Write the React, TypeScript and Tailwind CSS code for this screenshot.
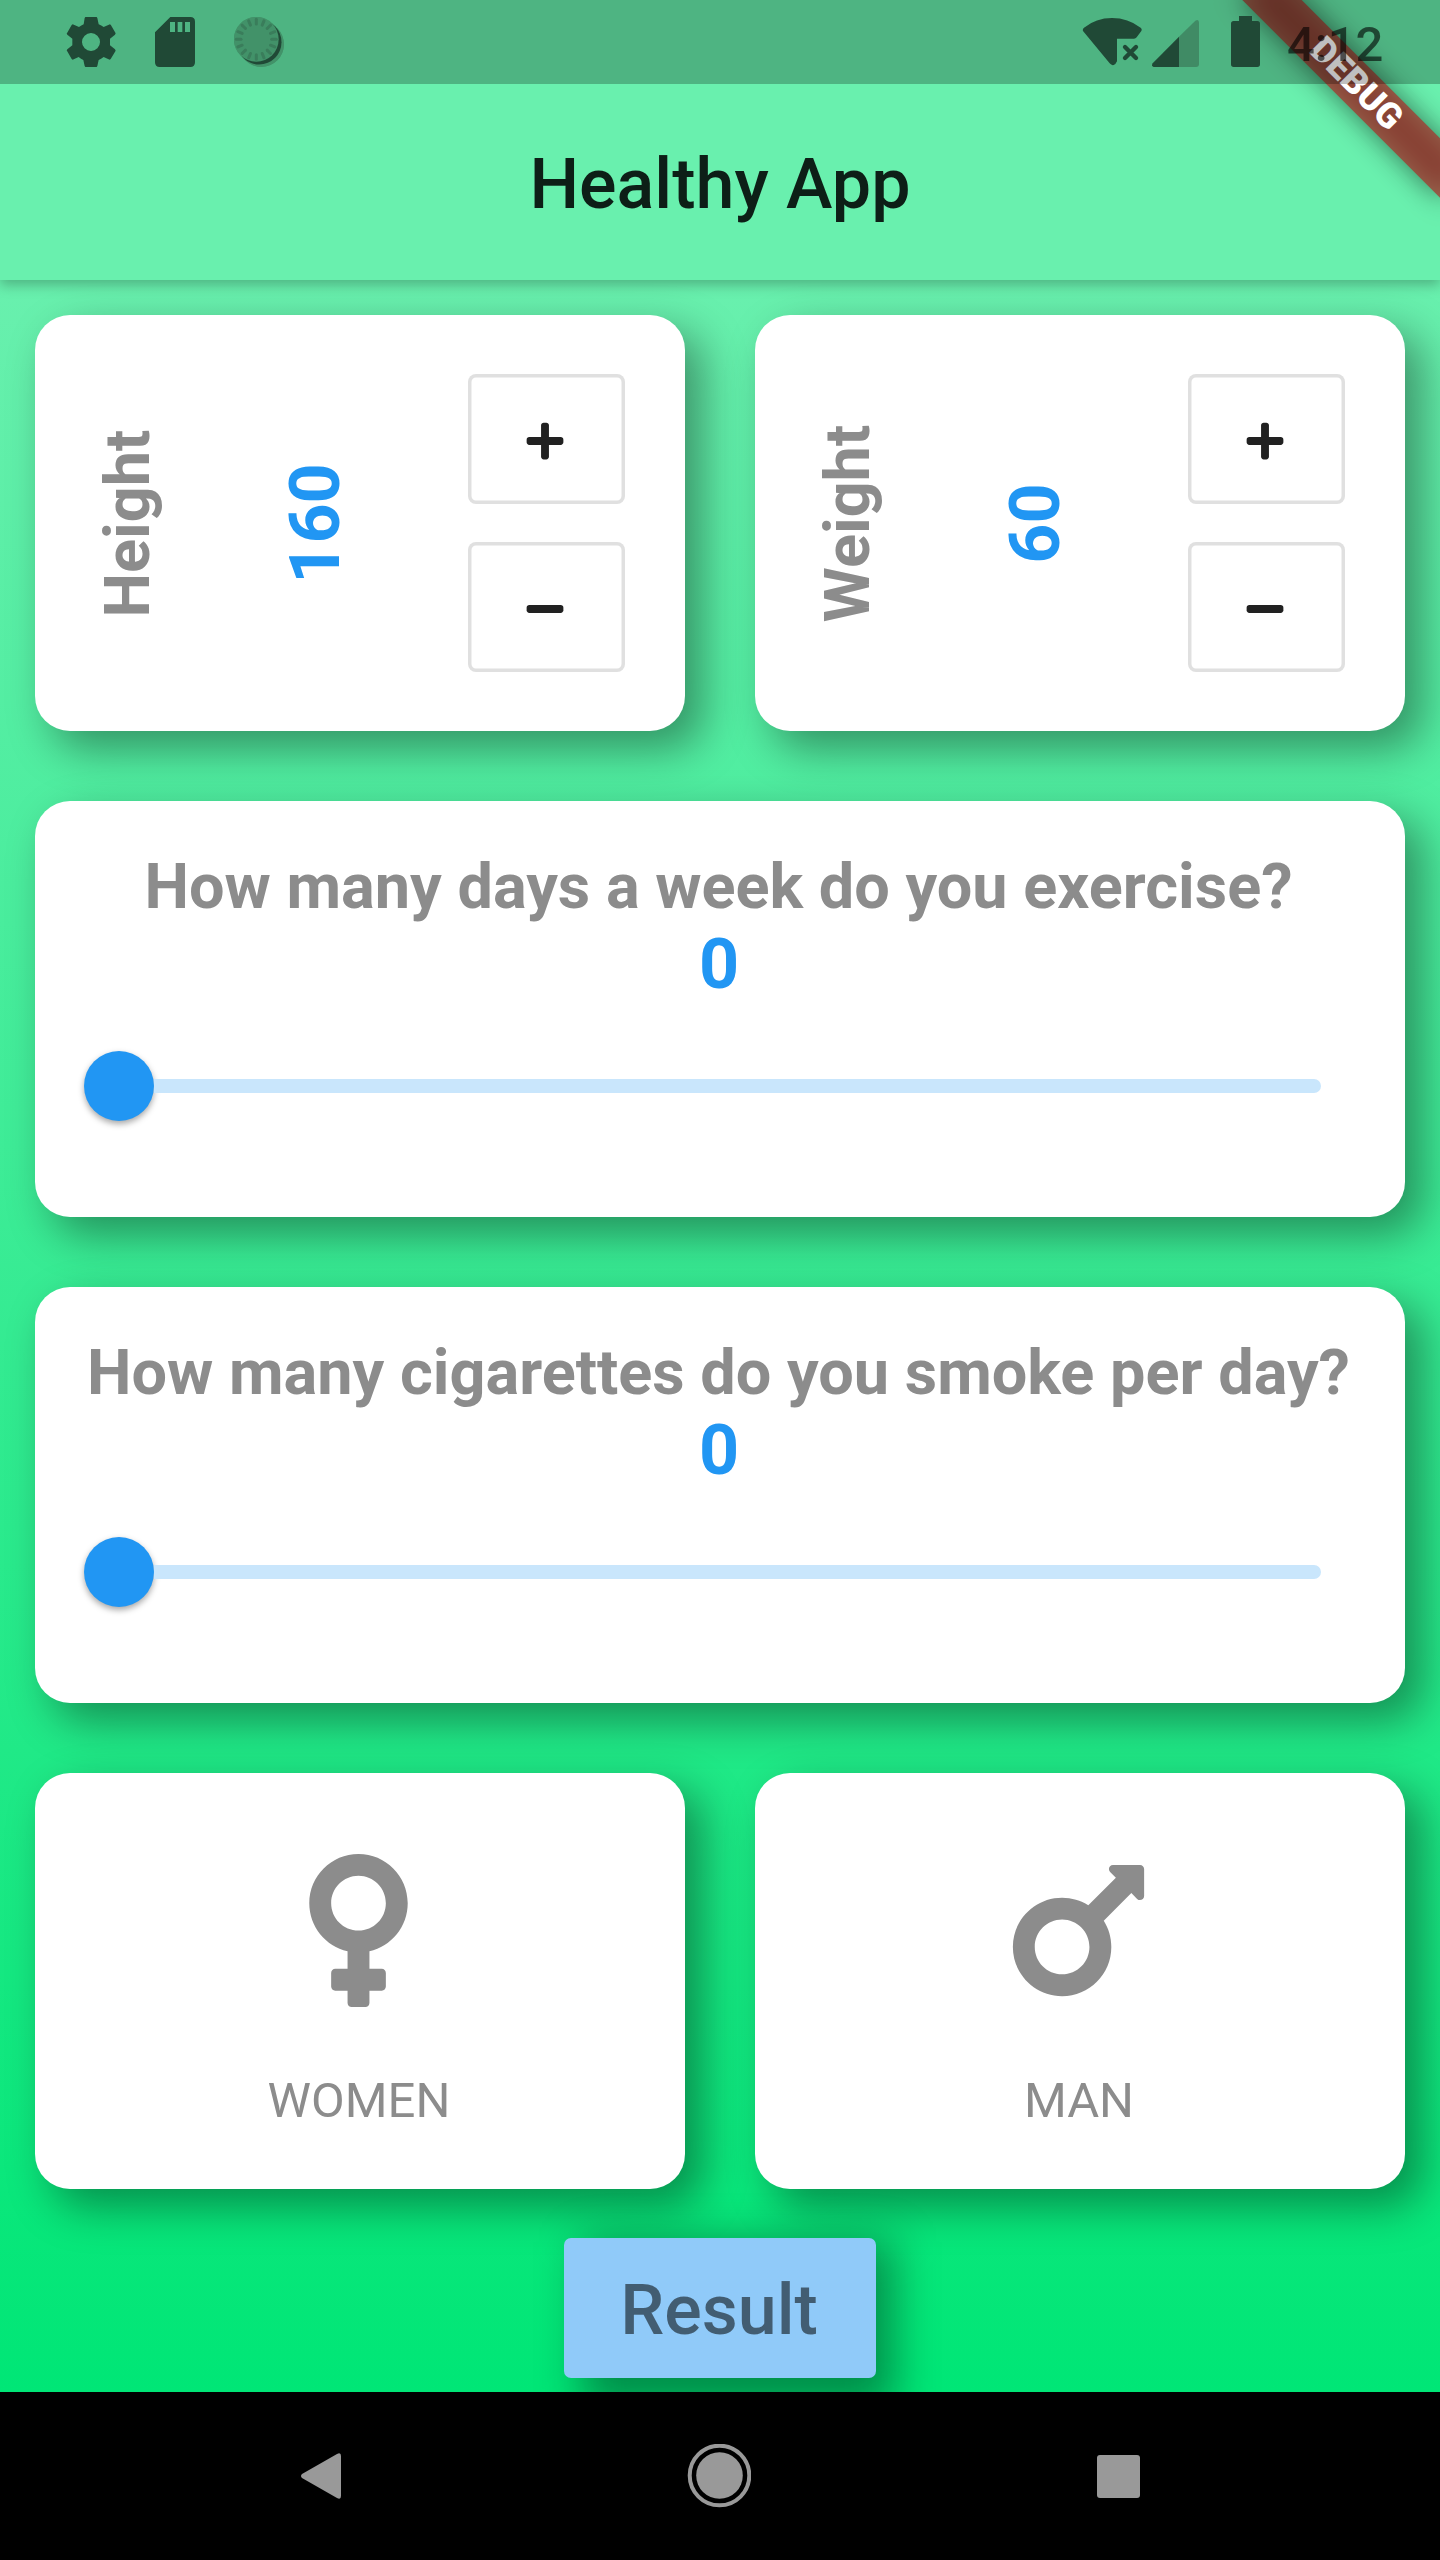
import React from "react";
import { FaMars, FaMinus, FaPlus, FaVenus } from "react-icons/fa";

const CARD = "h-[416px] rounded-[35px] bg-white shadow-[17.5px_17.5px_44px_rgba(0,0,0,0.38)]";

function StatusBar() {
  return (
    <div className="absolute inset-x-0 top-0 z-30 flex h-[84px] bg-black/25 pl-[66px] pt-4 text-[#204936]">
      <svg className="mt-px h-[50px] w-[50px]" viewBox="198 51 150 150" fill="currentColor">
        <path
          fillRule="evenodd"
          d="M256 51H290L292 54L296 73Q304 76 311 81L330 73L333 76L347 100L345 104L330 116V136L345 148L347 152L332 177L329 179L311 171Q303 177 296 180L292 198L290 201H256L254 198L250 180Q243 177 236 171L218 179L215 177L200 151L202 148L217 136V116L202 104L200 101L215 75L218 73L237 81Q244 76 251 73L254 54ZM273 99A27 27 0 1 0 273 153A27 27 0 1 0 273 99Z"
        />
      </svg>
      <svg className="ml-[39px] mt-px h-[50px] w-10" viewBox="465 51 120 150" fill="currentColor">
        <path
          fillRule="evenodd"
          d="M511 51H571Q585 51 585 65V187Q585 201 571 201H479Q465 201 465 187V97ZM510 66V96H525V66ZM533 66V96H547V66ZM555 66V96H570V66Z"
        />
      </svg>
      <svg className="ml-[39px] mt-px h-[50px] w-[50px]" viewBox="702 51 150 150">
        <circle cx="784" cy="133" r="68" fill="#429269" />
        <path d="M769 118L784 133" stroke="#429269" strokeWidth="135" strokeLinecap="round" />
        <circle cx="777.500" cy="126.500" r="67" fill="#204936" />
        <circle cx="769" cy="118" r="67" fill="#429269" />
        <g stroke="#3a7d5b" strokeWidth="9" strokeLinecap="round">
          {Array.from({ length: 16 }, (_, i) => (
            <path key={i} d="M769 58V72" transform={`rotate(${i * 22.5} 769 118)`} />
          ))}
        </g>
      </svg>
      <svg className="ml-[798px] h-[51px] w-[60px]" viewBox="126 48 180 153" fill="currentColor">
        <path d="M129 93Q127 87 132 83Q168 54 216 54Q264 54 302 83Q307 87 304 93L290 112Q287 116 282 116H231V184Q228 192 221 195Q215 197 209 190Z" />
        <path d="M255 141L288 174M288 141L255 174" stroke="currentColor" strokeWidth="13" strokeLinecap="round" />
      </svg>
      <svg className="ml-2.5 h-[51px] w-[47px]" viewBox="336 48 141 153">
        <path d="M417 110L466 62Q477 56 477 68V192Q477 201 468 201H417Z" fill="#408b65" />
        <path d="M417 110V201H341Q333 198 338 190Z" fill="currentColor" />
      </svg>
      <svg className="ml-8 h-[51px] w-[29px]" viewBox="573 48 87 153" fill="currentColor">
        <path d="M597 48H636V63H652Q660 63 660 71V193Q660 201 652 201H581Q573 201 573 193V71Q573 63 581 63H597Z" />
      </svg>
      <span className="ml-[27px] text-[49px] font-medium leading-[58px] text-black/60">4:12</span>
    </div>
  );
}

function DebugBanner() {
  return (
    <div className="pointer-events-none absolute right-0 top-0 z-20 h-[420px] w-[420px] overflow-hidden">
      <div className="absolute left-[196px] top-[63px] h-[42px] w-[280px] rotate-45 bg-black/50 blur-[14px]" />
      <div className="absolute left-[196px] top-[63px] flex h-[42px] w-[280px] rotate-45 items-center justify-center bg-[#b71c1c]/63 text-[35.7px] font-black leading-none text-white">
        DEBUG
      </div>
    </div>
  );
}

function StepButton({ children }: { children: React.ReactNode }) {
  return (
    <button className="flex h-[129.5px] w-[157.5px] items-center justify-center rounded-[8px] pr-[3px] pt-1 text-[42px] text-[#212121] shadow-[inset_0_0_0_3.5px_#e0e0e0]">
      {children}
    </button>
  );
}

function MeasureCard({ label, value }: { label: string; value: number }) {
  return (
    <div className={`${CARD} flex items-center pl-[56px]`}>
      <div className="flex w-[74px] justify-center">
        <span className="-rotate-90 whitespace-nowrap pr-px text-[63px] font-bold leading-[74px] text-[#8c8c8c]">{label}</span>
      </div>
      <div className="ml-[109px] flex w-[82px] justify-center">
        <span className="-rotate-90 whitespace-nowrap pr-px text-[70px] font-bold leading-[82px] text-[#2196f3]">{value}</span>
      </div>
      <div className="ml-[111.5px] flex flex-col gap-[38.5px]">
        <StepButton>
          <FaPlus />
        </StepButton>
        <StepButton>
          <FaMinus />
        </StepButton>
      </div>
    </div>
  );
}

function SliderCard({ question, value }: { question: string; value: number }) {
  return (
    <div className={`${CARD} flex flex-col items-center pt-[49px]`}>
      <p className="whitespace-nowrap pr-[3px] text-[63px] font-bold leading-[74px] text-[#8c8c8c]">{question}</p>
      <p className="-mt-px pr-0.5 text-[70px] font-bold leading-[82px] text-[#2196f3]">{value}</p>
      <div className="mt-[46px] flex w-[1286px] items-center self-start pl-[49px]">
        <div className="h-[70px] w-[70px] shrink-0 rounded-full bg-[#2196f3] shadow-[0_3px_6px_rgba(0,0,0,0.35)]" />
        <div className="h-3.5 flex-1 rounded-r-[7px] bg-[#c9e6fc]" />
      </div>
    </div>
  );
}

function GenderCard({ icon, label }: { icon: React.ReactNode; label: string }) {
  return (
    <div className={`${CARD} flex flex-col items-center pt-[70px] text-[#8c8c8c]`}>
      <div className="mr-[2.5px] text-[175px]">{icon}</div>
      <p className="mt-[54px] pr-0.5 text-[49px] leading-[58px]">{label}</p>
    </div>
  );
}

export default function App() {
  return (
    <div className="relative flex h-[2560px] w-[1440px] flex-col overflow-hidden bg-black font-['Roboto',sans-serif]">
      <StatusBar />
      <DebugBanner />
      <header className="relative z-10 flex h-[280px] shrink-0 items-center justify-center bg-[#69f0ae] pt-[84px] shadow-[0_5px_12px_rgba(0,0,0,0.25)]">
        <h1 className="pt-1 text-[70px] font-medium leading-[82px] text-black/87">Healthy App</h1>
      </header>
      <main className="flex h-[2112px] shrink-0 flex-col overflow-hidden bg-[linear-gradient(to_bottom,#69f0ae,#00e676)] px-[35px] pt-[35px]">
        <div className="flex flex-col gap-[70px]">
          <div className="grid grid-cols-2 gap-[70px]">
            <MeasureCard label="Height" value={160} />
            <MeasureCard label="Weight" value={60} />
          </div>
          <SliderCard question="How many days a week do you exercise?" value={0} />
          <SliderCard question="How many cigarettes do you smoke per day?" value={0} />
          <div className="grid grid-cols-2 gap-[70px]">
            <GenderCard icon={<FaVenus />} label="WOMEN" />
            <GenderCard icon={<FaMars />} label="MAN" />
          </div>
        </div>
        <div className="relative mt-[35px] flex h-[168px] w-[312px] shrink-0 items-center self-center">
          <div className="absolute inset-0 translate-x-[17.5px] translate-y-[17.5px] bg-black/38 blur-[22px]" />
          <button className="relative h-[140px] w-full rounded-[7px] bg-[#90caf9] pr-0.5 pt-[3px] text-[70px] font-medium leading-[82px] text-black/54">
            Result
          </button>
        </div>
      </main>
      <nav className="flex h-[168px] shrink-0 items-center justify-between pl-[301px] pr-[300px] text-[#999]">
        <svg className="h-[46px] w-10" viewBox="0 0 40 46" fill="currentColor">
          <path d="M1 21L36 1Q40-1 40 3V43Q40 47 36 45L1 25Q-1 23 1 21Z" />
        </svg>
        <svg className="h-16 w-16" viewBox="0 0 64 64">
          <circle cx="32.500" cy="31.500" r="29.800" fill="none" stroke="currentColor" strokeWidth="4" />
          <circle cx="32.500" cy="31.500" r="23.300" fill="currentColor" />
        </svg>
        <div className="h-[43px] w-[43px] rounded-[3px] bg-[#999]" />
      </nav>
    </div>
  );
}
